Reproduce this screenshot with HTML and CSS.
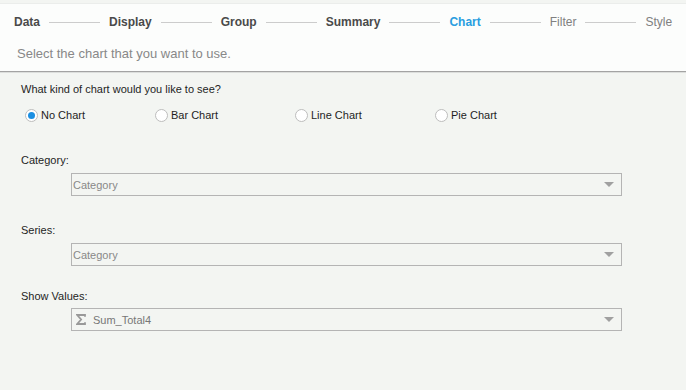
FILE: index.html
```html
<!DOCTYPE html>
<html lang="en">
<head>
  <meta charset="UTF-8">
  <title>Chart</title>
  <link rel="stylesheet" href="styles.css">
</head>
<body>
  <!-- wizard header -->
  <div class="header">
    <div class="steps">
      <span class="step done">Data</span><span class="step-line"></span>
      <span class="step done">Display</span><span class="step-line"></span>
      <span class="step done">Group</span><span class="step-line"></span>
      <span class="step done">Summary</span><span class="step-line"></span>
      <span class="step active">Chart</span><span class="step-line"></span>
      <span class="step">Filter</span><span class="step-line"></span>
      <span class="step">Style</span>
    </div>
    <p class="subtitle">Select the chart that you want to use.</p>
  </div>

  <!-- chart options -->
  <div class="content">
    <p class="question">What kind of chart would you like to see?</p>
    <div class="radios">
      <label class="radio"><span class="dot checked"></span>No Chart</label>
      <label class="radio"><span class="dot"></span>Bar Chart</label>
      <label class="radio"><span class="dot"></span>Line Chart</label>
      <label class="radio"><span class="dot"></span>Pie Chart</label>
    </div>

    <p class="field-label first">Category:</p>
    <div class="select">
      <span class="select-text">Category</span>
      <span class="arrow"></span>
    </div>

    <p class="field-label second">Series:</p>
    <div class="select">
      <span class="select-text">Category</span>
      <span class="arrow"></span>
    </div>

    <p class="field-label third">Show Values:</p>
    <div class="select">
      <svg class="sigma" width="10" height="11" viewBox="0 0 10 11">
        <path d="M9 2.8V1H1.2l3.9 4.5L1.2 10H9V8.2" fill="none" stroke="#999" stroke-width="1.8"/>
      </svg>
      <span class="select-text sum">Sum_Total4</span>
      <span class="arrow"></span>
    </div>
  </div>
</body>
</html>
```
FILE: styles.css
```css
/* ===== base ===== */
* {
  box-sizing: border-box;
  margin: 0;
  padding: 0;
}

body {
  background: #f3f5f2;
  font-family: "Liberation Sans", Arial, sans-serif;
  font-size: 11px;
  color: #1e1e1e;
}

/* ===== header / steps ===== */
.header {
  margin-top: 3px;
  height: 69px;
  background: #fcfdfc;
  border-top: 1px solid #ebedeb;
  border-bottom: 1px solid #a3a3a3;
  box-shadow: 0 1px 0 #dcdedc;
}

.steps {
  display: flex;
  align-items: center;
  height: 14px;
  margin-top: 11px;
  padding-left: 14px;
  font-size: 12px;
  line-height: 14px;
}
.step {
  color: #808080;
}
.step.done {
  color: #4a4a4a;
  font-weight: bold;
}
.step.active {
  color: #2a9ee0;
  font-weight: bold;
}
.step-line {
  width: 51px;
  height: 1px;
  margin: 1px 9px 0 9px;
  background: #cccccc;
}

.subtitle {
  margin-top: 17px;
  padding-left: 17px;
  font-size: 13px;
  line-height: 16px;
  color: #888;
}

/* ===== content ===== */
.content {
  padding: 10px 0 0 21px;
  line-height: 14px;
}

.radios {
  display: grid;
  grid-template-columns: 130px 140px 140px 140px;
  margin-top: 12px;
  padding-left: 4px;
}
.radio {
  display: flex;
  align-items: center;
  gap: 3px;
}
.dot {
  width: 13px;
  height: 13px;
  border: 1px solid #bdbdbd;
  border-radius: 50%;
  background: #fff;
  position: relative;
}
.dot.checked::after {
  content: "";
  position: absolute;
  left: 2px;
  top: 2px;
  width: 7px;
  height: 7px;
  border-radius: 50%;
  background: #1b8fe2;
}

.field-label.first {
  margin-top: 31px;
}
.field-label.second {
  margin-top: 27px;
}
.field-label.third {
  margin-top: 23px;
}

.select {
  display: flex;
  align-items: center;
  width: 551px;
  height: 23px;
  margin: 6px 0 0 50px;
  padding: 0 7px 0 1px;
  border: 1px solid #b4b4b4;
  background: #f3f5f2;
  color: #888;
}
.field-label.third + .select {
  margin-top: 5px;
}
.select-text {
  flex: 1;
}
.select-text.sum {
  margin-left: 7px;
  color: #777;
}
.sigma {
  margin-left: 3px;
}
.arrow {
  width: 0;
  height: 0;
  border-left: 5px solid transparent;
  border-right: 5px solid transparent;
  border-top: 5px solid #a0a0a0;
}
```
